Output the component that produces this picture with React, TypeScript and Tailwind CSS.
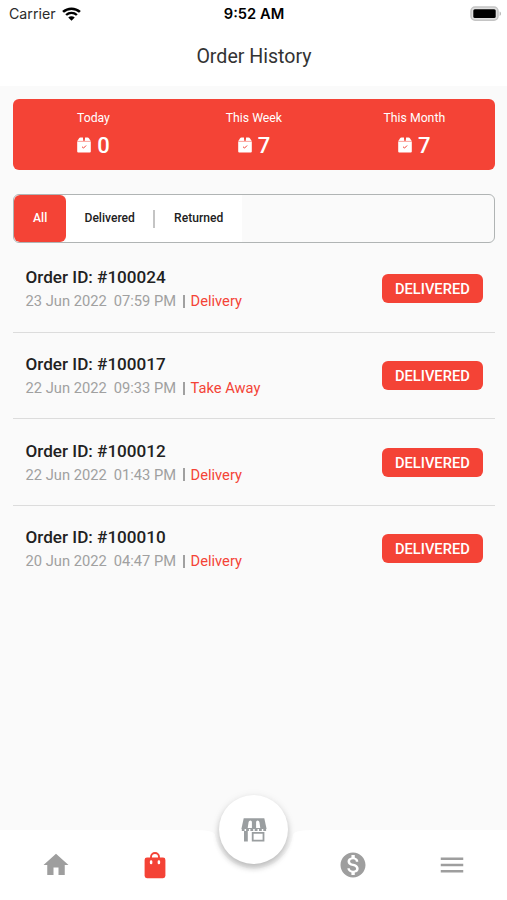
import React from 'react';
import { MdHome, MdMenu, MdMonetizationOn } from 'react-icons/md';

interface Order {
  id: number;
  date: string;
  time: string;
  type: string;
}

const orders: Order[] = [
  { id: 100024, date: '23 Jun 2022', time: '07:59 PM', type: 'Delivery' },
  { id: 100017, date: '22 Jun 2022', time: '09:33 PM', type: 'Take Away' },
  { id: 100012, date: '22 Jun 2022', time: '01:43 PM', type: 'Delivery' },
  { id: 100010, date: '20 Jun 2022', time: '04:47 PM', type: 'Delivery' },
];

const stats = [
  { label: 'Today', count: 0 },
  { label: 'This Week', count: 7 },
  { label: 'This Month', count: 7 },
];

const WifiIcon = () => (
  <svg width="19" height="14" viewBox="0 0 18 14" preserveAspectRatio="none" fill="none">
    <path d="M1 4.900C5.500.600 12.500.600 17 4.900" stroke="#000" strokeWidth="2.500" />
    <path d="M3.900 8C6.800 5.200 11.200 5.200 14.100 8" stroke="#000" strokeWidth="2.300" />
    <path d="M9 13.800 5.900 10.500c1.700-1.600 4.500-1.600 6.200 0z" fill="#000" />
  </svg>
);

const BatteryIcon = () => (
  <svg width="32" height="16" viewBox="0 0 32 16">
    <rect x="1" y="1" width="27" height="13.200" rx="4" fill="#e0e0e0" stroke="#c4c4c4" strokeWidth="1.500" />
    <rect x="3.300" y="3.300" width="22.400" height="8.800" rx="1.500" fill="#000" />
    <path d="M29.600 5.600c1.800.4 1.800 4 0 4.400z" fill="#b5b5b5" />
  </svg>
);

const BoxIcon = () => (
  <svg width="14" height="16" viewBox="0 0 14 16">
    <path d="M3.500.5h2.400l.4 3.500H.4l1.500-2.500Q2.500.5 3.500.5zM8.100.5h2.400q1 0 1.600 1l1.500 2.500H7.700z" fill="#fff" />
    <path d="M.2 4.600h13.600v9.900q0 1-1 1H1.200q-1 0-1-1z" fill="#fff" />
    <path d="M.2 4.300h13.600" stroke="#fbb4ae" strokeWidth=".8" />
    <path d="m5 9.700 1.500 1.400 2.600-2.600" fill="none" stroke="#f44336" strokeWidth="1" />
  </svg>
);

const BagIcon = () => (
  <svg width="22" height="27" viewBox="0 0 22 27">
    <path d="M7 7V5a4 4 0 0 1 8 0V7" fill="none" stroke="#f44336" strokeWidth="1.900" />
    <rect x=".6" y="5.500" width="20.800" height="20.700" rx="2.400" fill="#f44336" />
    <path d="M7.100 9.400v1.600M14.900 9.400v1.600" stroke="#fff" strokeWidth="2.500" strokeLinecap="round" />
  </svg>
);

const StoreIcon = () => (
  <svg width="26" height="26" viewBox="0 0 26 26">
    <path d="M2.700 1.200h20.600L25.600 12H.4z" fill="#9a9ea0" />
    <path d="M6.700 11 7.600 5q.3-1.600 1.800-1.600t1.500 1.600v6zM15.100 11V5q0-1.600 1.500-1.600T18.400 5l.9 6z" fill="#fff" />
    <path d="M.8 13h24.400" stroke="#9a9ea0" strokeWidth="2" strokeDasharray="2.800 1.500" />
    <path d="M3 14h3.800v10.500H3z" fill="#9a9ea0" />
    <path d="M11.700 15.900h10.800v7.700H11.700z" fill="none" stroke="#9a9ea0" strokeWidth="1.800" />
  </svg>
);

const OrderRow: React.FC<{ order: Order }> = ({ order }) => (
  <div className="flex h-[86.7px] items-center justify-between border-b border-[#dcdcdc] px-3 last:border-transparent">
    <div className="pt-px pl-[0.4px]">
      <div className="text-[17.1px] leading-[24px] font-medium text-[#212121]">Order ID: #{order.id}</div>
      <div className="flex items-center text-[14.7px] leading-[24px] text-[#a0a0a0]">
        <span>{order.date}</span>
        <span className="ml-[7px]">{order.time}</span>
        <span className="mr-[6px] ml-[7px] h-[13px] w-[1.5px] bg-[#a0a0a0]" />
        <span className="text-[#f44336]">{order.type}</span>
      </div>
    </div>
    <div className="flex h-[29px] w-[100.5px] items-center justify-center rounded-[6px] bg-[#f44336] pt-px text-[14.7px] font-medium text-white">
      DELIVERED
    </div>
  </div>
);

export default function App() {
  return (
    <div className="flex h-[900px] w-[507px] flex-col overflow-hidden bg-[#fafafa] font-['Roboto',sans-serif]">
      {/* Status bar and title */}
      <header className="h-[86px] flex-none bg-white">
        <div className="grid h-7 grid-cols-3 items-center pr-[5px] pl-[9px] font-['Inter',sans-serif] text-[14.2px] text-black">
          <div className="flex items-center gap-[6px]">
            <span className="text-[#2b2b2b]">Carrier</span>
            <WifiIcon />
          </div>
          <div className="-ml-[3px] text-center text-[14.7px] font-semibold">9:52 AM</div>
          <div className="flex justify-end">
            <BatteryIcon />
          </div>
        </div>
        <h1 className="mt-[17px] pl-px text-center text-[19.6px] leading-[24px] text-[#333]">Order History</h1>
      </header>

      <main className="flex-1 pr-[12.4px] pl-[13.2px] pt-[12.5px]">
        {/* Counters */}
        <section className="grid h-[71px] grid-cols-3 rounded-[6px] bg-[#f44336] text-white">
          {stats.map(stat => (
            <div key={stat.label} className="flex flex-col items-center pt-[11px]">
              <div className="text-[12.25px] leading-4">{stat.label}</div>
              <div className="mt-[6px] flex items-center gap-[6px]">
                <BoxIcon />
                <span className="pt-px text-[22px] leading-[26px] font-medium">{stat.count}</span>
              </div>
            </div>
          ))}
        </section>

        {/* Filter */}
        <div className="mt-[24.5px] flex h-[49px] overflow-hidden rounded-[6px] border border-[#b0b4b4] text-[12.1px] font-medium text-[#212121]">
          <div className="flex w-[52px] items-center justify-center rounded-[6px] bg-[#f44336] text-white">All</div>
          <div className="flex w-[176px] items-center bg-white">
            <span className="flex-1 text-center">Delivered</span>
            <span className="h-[18px] w-[2px] bg-[#c4c4c4]" />
            <span className="flex-1 text-center">Returned</span>
          </div>
        </div>

        <div className="mt-[3px]">
          {orders.map(order => (
            <OrderRow key={order.id} order={order} />
          ))}
        </div>
      </main>

      {/* Bottom navigation */}
      <nav className="relative h-[70px] flex-none">
        <svg className="absolute inset-0" width="507" height="70" viewBox="0 0 507 70">
          <path d="M0 0H194Q212 0 214.800 4A39.500 39.500 0 0 0 293.200 4Q296 0 314 0H507V70H0z" fill="#fff" />
        </svg>
        <div className="relative grid h-full grid-cols-5 items-center pr-[6px] pl-[7px] text-[#9e9e9e]">
          <MdHome size={30} className="mx-auto" />
          <div className="flex justify-center">
            <BagIcon />
          </div>
          <span />
          <MdMonetizationOn size={30} className="mx-auto" />
          <MdMenu size={30} className="mx-auto" />
        </div>
        <div className="absolute -top-[35px] left-[219.4px] flex size-[69px] items-center justify-center rounded-full bg-white shadow-[0_4px_6px_rgba(0,0,0,0.22),0_1px_10px_rgba(0,0,0,0.07)]">
          <StoreIcon />
        </div>
      </nav>
    </div>
  );
}
